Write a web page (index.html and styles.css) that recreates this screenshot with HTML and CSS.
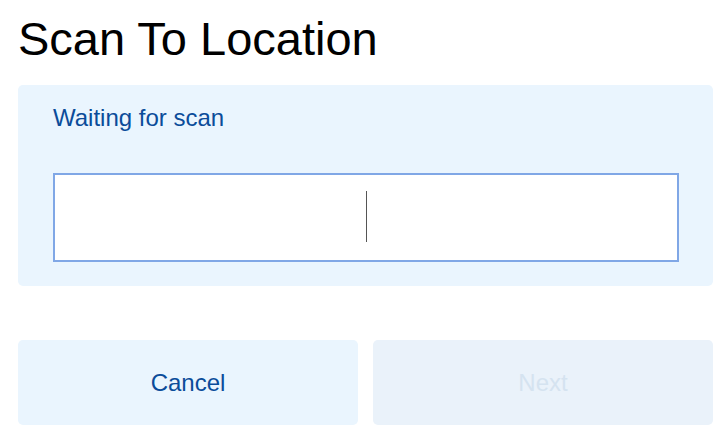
FILE: index.html
```html
<!DOCTYPE html>
<html lang="en">
<head>
    <meta charset="UTF-8">
    <meta name="viewport" content="width=device-width, initial-scale=1.0">
    <title>Scan To Location</title>
    <link rel="stylesheet" href="styles.css">
</head>
<body>
    <div class="page">
        <h1>Scan To Location</h1>

        <div class="scan-panel">
            <p class="scan-status">Waiting for scan</p>
            <div class="scan-input">
                <span class="caret"></span>
            </div>
        </div>

        <div class="actions">
            <button class="btn">Cancel</button>
            <button class="btn btn-disabled" disabled>Next</button>
        </div>
    </div>
</body>
</html>
```

FILE: styles.css
```css
* {
    margin: 0;
    padding: 0;
    box-sizing: border-box;
}

body {
    font-family: "Liberation Sans", Arial, sans-serif;
    background-color: #fff;
    color: #000;
}

.page {
    padding: 12px 14px 0 18px;
}

h1 {
    font-size: 47px;
    font-weight: normal;
    line-height: 53px;
    margin-bottom: 20px;
}

/* Panel de escaneo */
.scan-panel {
    background-color: #eaf5fe;
    border-radius: 5px;
    padding: 19px 34px 24px 35px;
}

.scan-status {
    color: #0b4c9a;
    font-size: 24px;
    line-height: 28px;
    margin-bottom: 41px;
}

.scan-input {
    height: 89px;
    background-color: #fff;
    border: 2px solid #80a7e6;
    display: flex;
    justify-content: center;
    align-items: center;
}

.caret {
    display: block;
    width: 1px;
    height: 51px;
    margin-top: -3px;
    background-color: #555;
}

/* Botones */
.actions {
    display: flex;
    gap: 15px;
    margin-top: 54px;
}

.btn {
    flex: 1;
    height: 85px;
    border: none;
    border-radius: 5px;
    background-color: #eaf5fe;
    color: #0b4c9a;
    font-family: "Liberation Sans", Arial, sans-serif;
    font-size: 24px;
    cursor: pointer;
}

.btn-disabled {
    background-color: #eaf2fa;
    color: #d5e3f0;
    cursor: default;
}
```
